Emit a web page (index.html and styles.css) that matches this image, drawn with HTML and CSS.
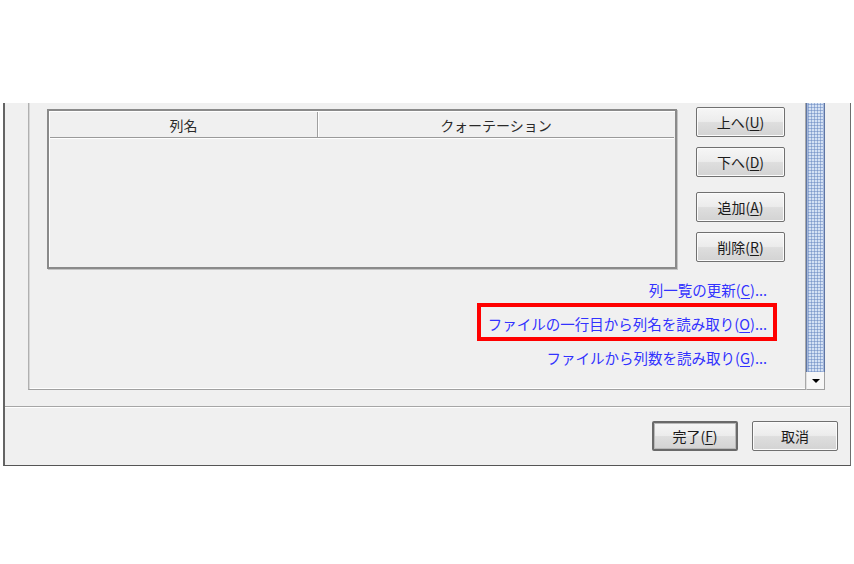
FILE: index.html
```html
<!DOCTYPE html>
<html lang="ja">
<head>
<meta charset="utf-8">
<title>列設定</title>
<link rel="stylesheet" href="styles.css">
</head>
<body>
<div class="top"></div>
<div class="window">
  <div class="pane">
    <div class="group">
      <div class="row">
        <div class="table">
          <div class="thead">
            <div class="th c1">列名</div>
            <div class="th c2">クォーテーション</div>
          </div>
          <div class="tbody"></div>
        </div>
        <div class="side">
          <button class="btn">上へ(<u>U</u>)</button>
          <button class="btn b2">下へ(<u>D</u>)</button>
          <button class="btn b3">追加(<u>A</u>)</button>
          <button class="btn b4">削除(<u>R</u>)</button>
        </div>
      </div>
      <div class="links">
        <a class="link l1">列一覧の更新(<u>C</u>)...</a>
        <a class="link l2 marked">ファイルの一行目から列名を読み取り(<u>O</u>)...</a>
        <a class="link l3">ファイルから列数を読み取り(<u>G</u>)...</a>
      </div>
    </div>
    <div class="scrollbar">
      <div class="thumb"></div>
      <div class="arrow"><span class="tri"></span></div>
    </div>
  </div>
  <div class="sep"></div>
  <div class="footer">
    <button class="btn fbtn default">完了(<u>F</u>)</button>
    <button class="btn fbtn">取消</button>
  </div>
</div>
</body>
</html>
```
FILE: styles.css
```css
* { box-sizing: border-box; }
html, body { margin: 0; padding: 0; background: #ffffff; }
body {
  width: 854px;
  height: 564px;
  overflow: hidden;
  font-family: "Noto Sans CJK JP", "Noto Sans", sans-serif;
  font-size: 14px;
  color: #1b1b1b;
}
.top { height: 103px; }
.window {
  margin-left: 3px;
  width: 848px;
  height: 363px;
  background: #f0f0f0;
  border-left: 2px solid #646464;
  border-right: 1px solid #6e6e6e;
  border-bottom: 1px solid #555555;
  display: flex;
  flex-direction: column;
}
.pane {
  height: 287px;
  display: flex;
  padding-left: 23px;
}
.group {
  width: 778px;
  height: 287px;
  border-left: 1px solid #b0b0b0;
  border-right: 1px solid #a8a8a8;
  border-bottom: 1px solid #a0a0a0;
  box-shadow: inset 1px 0 0 #d6d6d6, inset 0 -1px 0 #ffffff;
  padding: 4px 0 0 18px;
}
.row { display: flex; align-items: flex-start; }
.table {
  margin-top: 2px;
  width: 630px;
  height: 160px;
  border: 2px solid #8a8a8a;
  box-shadow: inset 1px 1px 0 #ffffff, 1px 1px 0 #c4c4c4;
  display: flex;
  flex-direction: column;
}
.thead {
  display: flex;
  height: 26px;
  border-bottom: 1px solid #9a9a9a;
  box-shadow: 0 1px 0 #ffffff;
  margin: 1px 1px 0 1px;
}
.th {
  display: flex;
  align-items: center;
  justify-content: center;
  font-size: 14px;
  color: #2a2a2a;
}
.c1 { width: 268px; border-right: 1px solid #a0a0a0; box-shadow: 1px 0 0 #ffffff; }
.c2 { flex: 1; }
.tbody { flex: 1; }
.side {
  margin-left: 19px;
  display: flex;
  flex-direction: column;
}
.btn {
  font-family: "Noto Sans CJK JP", "Noto Sans", sans-serif;
  font-size: 14px;
  color: #1b1b1b;
  width: 89px;
  height: 30px;
  padding: 0;
  border: 1px solid #707070;
  border-radius: 2px;
  background: linear-gradient(#f6f6f6 0%, #ececec 48%, #dedede 52%, #d3d3d3 100%);
  box-shadow: inset 0 0 0 1px #fbfbfb;
  line-height: 26px;
}
.btn u { text-underline-offset: 2px; }
.b2 { margin-top: 10px; }
.b3 { margin-top: 15px; }
.b4 { margin-top: 10px; }
.links {
  display: flex;
  flex-direction: column;
  align-items: flex-end;
  padding-right: 38px;
  margin-top: 11px;
}
.link {
  display: block;
  font-size: 14.5px;
  line-height: 20px;
  color: #3232ff;
  white-space: nowrap;
}
.link u { text-underline-offset: 2px; }
.l2 { margin-top: 3px; }
.l3 { margin-top: 7px; }
.marked {
  border: 4px solid #ff0000;
  padding: 7px 6px 3px 7px;
  margin-right: -10px;
}
.scrollbar {
  width: 19px;
  height: 287px;
  display: flex;
  flex-direction: column;
}
.thumb {
  flex: 1;
  border-left: 1px solid #5f76a3;
  border-right: 1px solid #5f76a3;
  box-shadow: inset 1px 0 0 #a3b6da, inset -1px 0 0 #a3b6da;
  background-color: #d4e1f4;
  background-image: radial-gradient(circle, #7f9bcc 0.9px, transparent 1.2px);
  background-size: 3px 3px;
}
.arrow {
  height: 18px;
  background: #f7f7f7;
  border-right: 1px solid #a0a0a0;
  border-bottom: 1px solid #a0a0a0;
  border-left: 1px solid #e0e0e0;
  display: flex;
  align-items: center;
  justify-content: center;
}
.tri {
  width: 0;
  height: 0;
  border-left: 4px solid transparent;
  border-right: 4px solid transparent;
  border-top: 4px solid #000000;
}
.sep {
  margin-top: 16px;
  height: 2px;
  border-top: 1px solid #a6a6a6;
  border-bottom: 1px solid #ffffff;
}
.footer {
  display: flex;
  justify-content: flex-end;
  align-items: flex-start;
  padding: 13px 12px 0 0;
  gap: 14px;
}
.fbtn { width: 86px; height: 30px; }
.default {
  border: 2px solid #6a6a6a;
  box-shadow: inset 0 0 0 1px #b8b8b8;
  line-height: 24px;
}
```
